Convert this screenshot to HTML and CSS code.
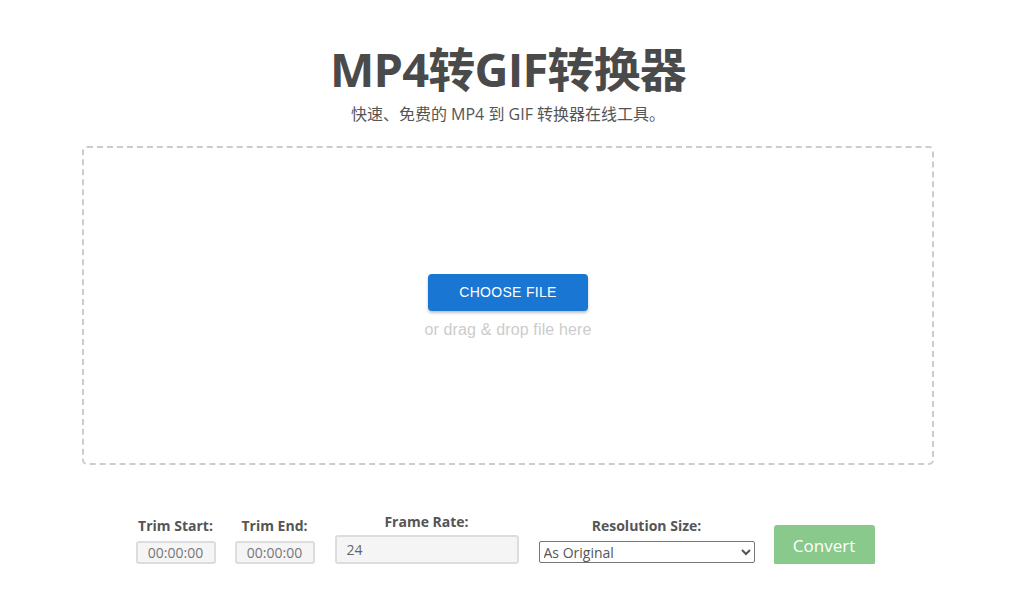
FILE: index.html
```html
<!DOCTYPE html>
<html lang="zh">
<head>
<meta charset="utf-8">
<title>MP4转GIF转换器</title>
<link rel="stylesheet" href="styles.css">
</head>
<body>
<div class="page">
  <h1 class="title">MP4转GIF转换器</h1>
  <p class="subtitle">快速、免费的 MP4 到 GIF 转换器在线工具。</p>
  <div class="dropzone">
    <button class="choose">CHOOSE FILE</button>
    <div class="drop-hint">or drag &amp; drop file here</div>
  </div>
  <div class="controls">
    <div class="field field-trim">
      <label class="label">Trim Start:</label>
      <input class="time" type="text" value="00:00:00">
    </div>
    <div class="field field-trim">
      <label class="label">Trim End:</label>
      <input class="time" type="text" value="00:00:00">
    </div>
    <div class="field field-rate">
      <label class="label">Frame Rate:</label>
      <input class="rate" type="text" value="24">
    </div>
    <div class="field field-res">
      <label class="label">Resolution Size:</label>
      <select class="res">
        <option>As Original</option>
      </select>
    </div>
    <button class="convert">Convert</button>
  </div>
</div>
</body>
</html>
```

FILE: styles.css
```css
html, body {
  margin: 0;
  padding: 0;
  background: #fff;
}
body {
  font-family: "Open Sans", "Noto Sans CJK SC", sans-serif;
  color: #555;
}
.page {
  width: 1016px;
  display: flex;
  flex-direction: column;
  align-items: center;
}
.title {
  margin: 44px 0 0;
  font-size: 47px;
  line-height: 50px;
  font-weight: 700;
  color: #4a4a4a;
  letter-spacing: -0.8px;
  font-family: "Open Sans", "Noto Sans CJK SC", sans-serif;
}
.subtitle {
  margin: 10px 0 0;
  font-size: 16px;
  line-height: 20px;
  color: #555;
}
.dropzone {
  box-sizing: border-box;
  margin: 22px 0 0;
  width: 852px;
  height: 319px;
  border: 2px dashed #ccc;
  border-radius: 5px;
  display: flex;
  flex-direction: column;
  align-items: center;
  justify-content: center;
  padding-top: 2px;
}
.choose {
  width: 160px;
  height: 37px;
  border: none;
  border-radius: 4px;
  background: #1976d2;
  color: #fff;
  font-family: "Liberation Sans", Arial, sans-serif;
  font-size: 14px;
  letter-spacing: 0.3px;
  box-shadow: 0 2px 3px rgba(0,0,0,0.25);
  cursor: pointer;
}
.drop-hint {
  margin-top: 9px;
  font-family: "Liberation Sans", Arial, sans-serif;
  font-size: 16px;
  letter-spacing: 0.15px;
  line-height: 20px;
  color: #ccc;
}
.controls {
  margin-top: 48px;
  margin-right: 6px;
  display: flex;
  align-items: flex-end;
  gap: 19px;
}
.field {
  display: flex;
  flex-direction: column;
  align-items: center;
}
.label {
  font-size: 14px;
  font-weight: 700;
  line-height: 18px;
  color: #555;
}
.field-trim { width: 80px; }
.field-trim .label { margin-bottom: 6px; }
.field-rate { width: 184px; margin-left: 1px; }
.field-rate .label { margin-bottom: 4px; }
.field-res { width: 216px; margin-left: 1px; }
.field-res .label { margin-bottom: 6px; }
.time {
  box-sizing: border-box;
  width: 80px;
  height: 23px;
  border: 2px solid #ddd;
  border-radius: 3px;
  background: #f5f5f5;
  text-align: center;
  font-family: "Open Sans", sans-serif;
  font-size: 14px;
  color: #777;
  padding: 0;
}
.rate {
  box-sizing: border-box;
  width: 184px;
  height: 29px;
  border: 2px solid #ddd;
  border-radius: 3px;
  background: #f5f5f5;
  font-family: "Open Sans", sans-serif;
  font-size: 14px;
  color: #666;
  padding: 0 0 0 10px;
}
.res {
  box-sizing: border-box;
  width: 216px;
  height: 22px;
  border: 1px solid #767676;
  border-radius: 2px;
  background: #fff;
  font-family: "Open Sans", sans-serif;
  font-size: 14px;
  color: #555;
  padding: 0;
  margin-bottom: 1px;
}
.convert {
  width: 101px;
  height: 40px;
  border: none;
  border-radius: 3px;
  background: #89c98c;
  color: #fff;
  font-family: "Open Sans", sans-serif;
  font-size: 17px;
  cursor: pointer;
  margin-bottom: -1px;
}
```
